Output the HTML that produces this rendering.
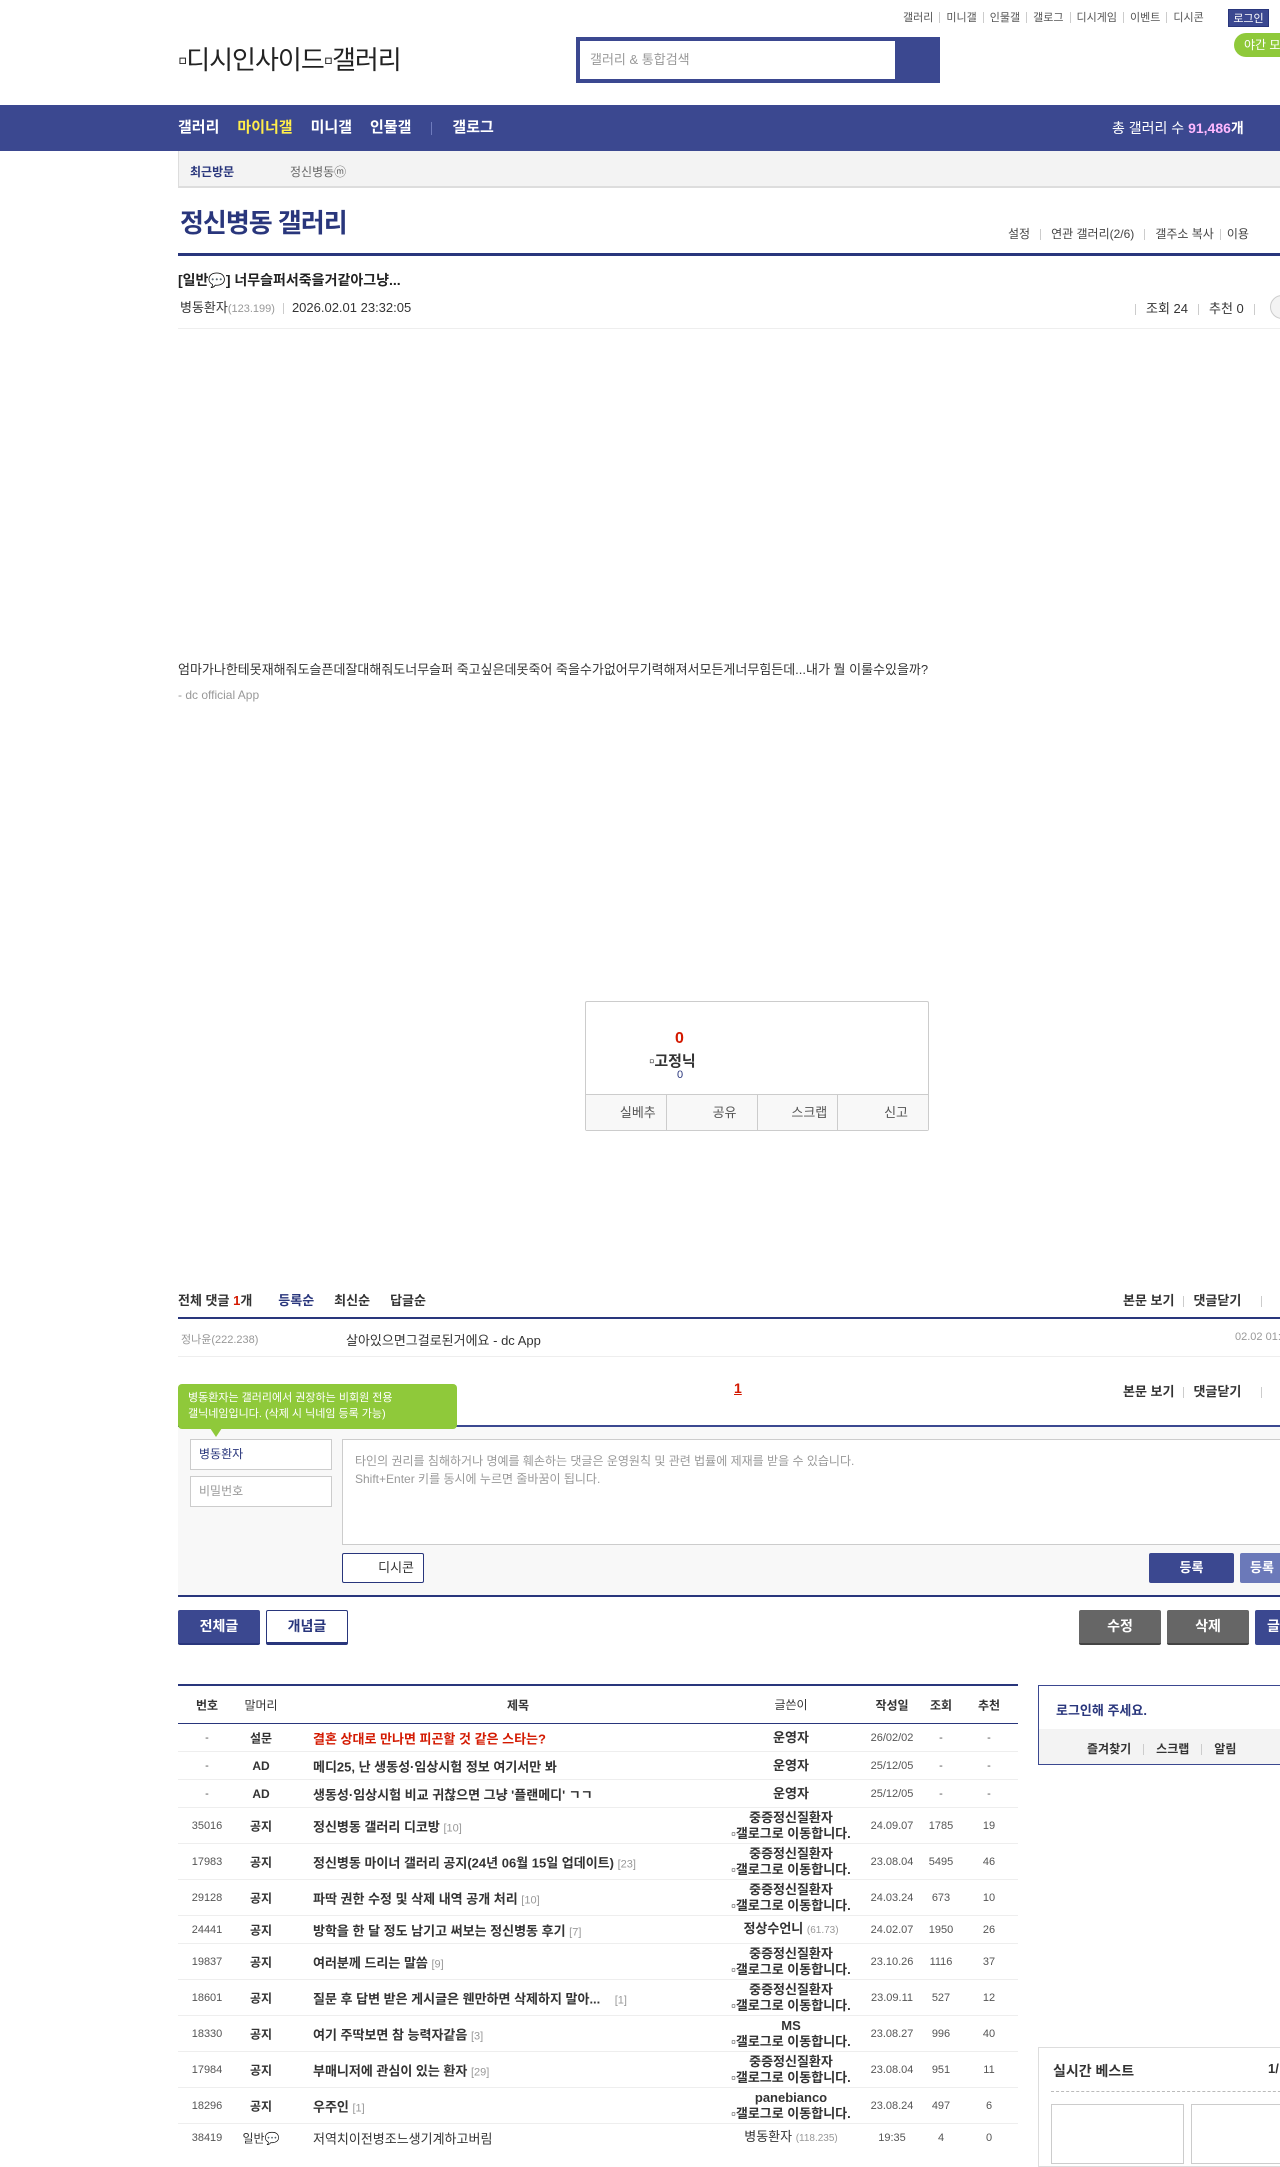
<!DOCTYPE html>
<html><head><meta charset="utf-8">
<style>
*{margin:0;padding:0;box-sizing:border-box}
body{width:1280px;height:2143px;position:relative;overflow:hidden;background:#fff;font-family:"Liberation Sans","Noto Sans CJK KR",sans-serif;color:#333;font-size:12px}
.a{position:absolute;white-space:nowrap}
.nv{color:#29367c}
.tl a{color:#555;font-size:11px}
.sep{display:inline-block;width:1px;height:11px;background:#ccc;margin:0 6px;vertical-align:middle}
.row{position:absolute;left:178px;width:840px;border-bottom:1px solid #eee;font-size:12px}
.row span{position:absolute;top:50%;transform:translateY(-50%)}
.c1{left:0;width:58px;text-align:center;color:#555;font-size:11px}
.c2{left:58px;width:50px;text-align:center;font-weight:bold}
.c3{left:135px;font-weight:bold;color:#333;font-size:13px}
.c3 i{font-style:normal;font-weight:normal;color:#999;font-size:11px}
.c4{left:530px;width:166px;text-align:center;font-weight:bold;line-height:16px;font-size:13px}
.c4 small{font-weight:normal;color:#999;font-size:10px}
.c5{left:686px;width:56px;text-align:center;font-size:11px;color:#555}
.c6{left:742px;width:42px;text-align:center;font-size:11px;color:#555}
.c7{left:790px;width:42px;text-align:center;font-size:11px;color:#555}
.btn{position:absolute;text-align:center;font-weight:bold;font-size:14px;color:#fff;border-radius:2px}
</style></head><body>

<div class="a tl" style="left:903px;top:10px;line-height:14px"><a>갤러리</a><span class="sep"></span><a>미니갤</a><span class="sep"></span><a>인물갤</a><span class="sep"></span><a>갤로그</a><span class="sep"></span><a>디시게임</a><span class="sep"></span><a>이벤트</a><span class="sep"></span><a>디시콘</a></div>
<div class="a" style="left:1228px;top:9px;width:41px;height:18px;background:#3b4890;color:#fff;font-size:11px;text-align:center;line-height:18px;border:1px solid #29367c">로그인</div>
<div class="a" style="left:1234px;top:33px;width:60px;height:24px;background:#8fc93a;color:#fff;font-size:12px;line-height:24px;padding-left:10px;border-radius:12px 0 0 12px">야간 모드</div>

<div class="a" style="left:178px;top:40px;font-size:26px;color:#222;letter-spacing:-1px">▫디시인사이드▫갤러리</div>

<div class="a" style="left:576px;top:37px;width:364px;height:46px;background:#3b4890"></div>
<div class="a" style="left:580px;top:41px;width:315px;height:38px;background:#fff;color:#999;font-size:13px;line-height:38px;padding-left:10px">갤러리 &amp; 통합검색</div>

<div class="a" style="left:0;top:105px;width:1280px;height:46px;background:#3b4890"></div>
<div class="a" style="left:178px;top:119px;font-size:15px;font-weight:bold;color:#fff;line-height:18px">갤러리<span style="color:#ffed4a;margin-left:18px">마이너갤</span><span style="margin-left:18px">미니갤</span><span style="margin-left:18px">인물갤</span><span style="display:inline-block;width:1px;height:13px;background:#6e7bbd;margin:0 20px;vertical-align:middle"></span>갤로그</div>
<div class="a" style="left:1112px;top:119px;font-size:14px;color:#fff;line-height:18px">총 갤러리 수 <b style="color:#ffb8ff">91,486</b><b>개</b></div>

<div class="a" style="left:178px;top:151px;width:1102px;height:37px;background:#f3f3f3;border-bottom:2px solid #ddd;border-left:1px solid #ddd"></div>
<div class="a nv" style="left:190px;top:163px;font-size:12px;font-weight:bold">최근방문</div>
<div class="a" style="left:290px;top:163px;font-size:12px;color:#666">정신병동ⓜ</div>

<div class="a nv" style="left:180px;top:203px;font-size:26px;font-weight:bold;letter-spacing:-1px">정신병동 갤러리</div>
<div class="a" style="left:1008px;top:225px;font-size:12px;color:#444">설정<span class="sep" style="margin:0 10px"></span>연관 갤러리(2/6)<span class="sep" style="margin:0 10px"></span>갤주소 복사<span class="sep"></span>이용</div>
<div class="a" style="left:178px;top:253px;width:1102px;height:3px;background:#29367c"></div>

<div class="a" style="left:178px;top:270px;font-size:14px;font-weight:bold;color:#222">[일반💬] 너무슬퍼서죽을거같아그냥...</div>
<div class="a" style="left:180px;top:297px;font-size:13px;color:#333">병동환자<span style="font-size:11px;color:#999">(123.199)</span><span class="sep" style="margin:0 8px"></span>2026.02.01 23:32:05</div>
<div class="a" style="left:1135px;top:298px;font-size:13px;color:#333"><span class="sep" style="margin:0 10px 0 0"></span>조회 24<span class="sep" style="margin:0 10px"></span>추천 0<span class="sep" style="margin:0 10px"></span></div>
<div class="a" style="left:1270px;top:295px;width:24px;height:24px;border:1px solid #ccc;border-radius:12px;background:#f3f3f3"></div>
<div class="a" style="left:178px;top:328px;width:1102px;height:1px;background:#eee"></div>

<div class="a" style="left:178px;top:659px;font-size:13px;color:#333">엄마가나한테못재해줘도슬픈데잘대해줘도너무슬퍼 죽고싶은데못죽어 죽을수가없어무기력해져서모든게너무힘든데...내가 뭘 이룰수있을까?</div>
<div class="a" style="left:178px;top:688px;font-size:12px;color:#999">- dc official App</div>

<div class="a" style="left:585px;top:1001px;width:344px;height:130px;border:1px solid #ccc;border-radius:2px"></div>
<div class="a" style="left:675px;top:1030px;font-size:16px;font-weight:bold;color:#d31900">0</div>
<div class="a" style="left:649px;top:1050px;font-size:15px;font-weight:bold;color:#333">▫고정닉</div>
<div class="a" style="left:677px;top:1069px;font-size:11px;color:#29367c">0</div>
<div class="a" style="left:586px;top:1094px;width:342px;height:36px;background:#f8f8f8;border-top:1px solid #ccc;display:flex;font-size:13px;color:#555">
<div style="flex:1;border-right:1px solid #ccc;text-align:right;padding-right:10px;line-height:35px">실베추</div>
<div style="flex:1;border-right:1px solid #ccc;text-align:right;padding-right:20px;line-height:35px">공유</div>
<div style="flex:1;border-right:1px solid #ccc;text-align:right;padding-right:10px;line-height:35px">스크랩</div>
<div style="flex:1;text-align:right;padding-right:20px;line-height:35px">신고</div></div>

<div class="a" style="left:178px;top:1290px;font-size:13px;font-weight:bold;color:#333">전체 댓글 <span style="color:#d31900">1</span>개<span class="nv" style="margin-left:26px">등록순</span><span style="margin-left:20px">최신순</span><span style="margin-left:20px">답글순</span></div>
<div class="a" style="left:1123px;top:1290px;font-size:13px;font-weight:bold;color:#333">본문 보기<span class="sep" style="margin:0 9px"></span>댓글닫기<span class="sep" style="margin:0 20px"></span></div>
<div class="a" style="left:178px;top:1317px;width:1102px;height:2px;background:#29367c"></div>
<div class="a" style="left:181px;top:1331px;font-size:11px;color:#999">정나윤(222.238)</div>
<div class="a" style="left:346px;top:1330px;font-size:13px;color:#333">살아있으면그걸로된거에요 - dc App</div>
<div class="a" style="left:1235px;top:1331px;font-size:11px;color:#999">02.02 01:</div>
<div class="a" style="left:178px;top:1356px;width:1102px;height:1px;background:#eee"></div>

<div class="a" style="left:734px;top:1380px;font-size:14px;font-weight:bold;color:#d31900;text-decoration:underline">1</div>
<div class="a" style="left:1123px;top:1381px;font-size:13px;font-weight:bold;color:#333">본문 보기<span class="sep" style="margin:0 9px"></span>댓글닫기<span class="sep" style="margin:0 20px"></span></div>
<div class="a" style="left:178px;top:1425px;width:1102px;height:2px;background:#3b4890"></div>
<div class="a" style="left:178px;top:1427px;width:1102px;height:168px;background:#f8f8f8"></div>
<div class="a" style="left:178px;top:1384px;width:279px;height:45px;background:#8fc93a;border-radius:4px;color:#fff;font-size:11px;line-height:16px;padding:6px 10px">병동환자는 갤러리에서 권장하는 비회원 전용<br>갤닉네임입니다. (삭제 시 닉네임 등록 가능)</div>
<div class="a" style="left:210px;top:1428px;width:0;height:0;border-left:6px solid transparent;border-right:6px solid transparent;border-top:9px solid #8fc93a"></div>
<div class="a" style="left:190px;top:1439px;width:142px;height:31px;background:#fff;border:1px solid #ccc;font-size:12px;color:#29367c;line-height:29px;padding-left:8px">병동환자</div>
<div class="a" style="left:190px;top:1476px;width:142px;height:31px;background:#fff;border:1px solid #ccc;font-size:12px;color:#999;line-height:29px;padding-left:8px">비밀번호</div>
<div class="a" style="left:342px;top:1439px;width:950px;height:106px;background:#fff;border:1px solid #ccc;font-size:12px;color:#999;line-height:18px;padding:12px 12px">타인의 권리를 침해하거나 명예를 훼손하는 댓글은 운영원칙 및 관련 법률에 제재를 받을 수 있습니다.<br>Shift+Enter 키를 동시에 누르면 줄바꿈이 됩니다.</div>
<div class="a" style="left:342px;top:1553px;width:82px;height:30px;background:#fff;border:1px solid #29367c;border-radius:2px;font-size:13px;color:#333;line-height:28px;text-align:right;padding-right:9px">디시콘</div>
<div class="btn" style="left:1149px;top:1553px;width:85px;height:30px;background:#3b4890;line-height:30px;font-size:13px">등록</div>
<div class="btn" style="left:1240px;top:1553px;width:60px;height:30px;background:#6b79b9;line-height:30px;font-size:13px;text-align:left;padding-left:10px">등록</div>
<div class="a" style="left:178px;top:1595px;width:1102px;height:2px;background:#29367c"></div>

<div class="btn" style="left:178px;top:1610px;width:82px;height:35px;background:#3b4890;line-height:33px;border-bottom:2px solid #29367c">전체글</div>
<div class="btn" style="left:266px;top:1610px;width:82px;height:35px;background:#fff;color:#29367c;border:1px solid #29367c;border-bottom:3px solid #29367c;line-height:31px">개념글</div>
<div class="btn" style="left:1079px;top:1610px;width:82px;height:35px;background:#666;line-height:33px;border-bottom:2px solid #444">수정</div>
<div class="btn" style="left:1167px;top:1610px;width:82px;height:35px;background:#666;line-height:33px;border-bottom:2px solid #444">삭제</div>
<div class="btn" style="left:1255px;top:1610px;width:40px;height:35px;background:#3b4890;line-height:33px;text-align:left;padding-left:12px">글</div>

<div class="a" style="left:178px;top:1684px;width:840px;height:2px;background:#29367c"></div>
<div class="row" style="top:1686px;height:38px;border-bottom:1px solid #29367c;font-weight:bold;font-size:12px">
<span class="c1" style="font-size:12px;color:#333">번호</span><span class="c2" style="font-weight:normal">말머리</span><span style="left:300px;width:80px;text-align:center">제목</span><span class="c4" style="font-weight:normal;font-size:12px">글쓴이</span><span class="c5" style="font-size:12px;color:#333">작성일</span><span class="c6" style="font-size:12px;color:#333">조회</span><span class="c7" style="font-size:12px;color:#333">추천</span></div>

<div class="row" style="top:1724px;height:28px"><span class="c1">-</span><span class="c2">설문</span><span class="c3" style="color:#d31900">결혼 상대로 만나면 피곤할 것 같은 스타는?</span><span class="c4">운영자</span><span class="c5">26/02/02</span><span class="c6">-</span><span class="c7">-</span></div>
<div class="row" style="top:1752px;height:28px"><span class="c1">-</span><span class="c2">AD</span><span class="c3">메디25, 난 생동성·임상시험 정보 여기서만 봐</span><span class="c4">운영자</span><span class="c5">25/12/05</span><span class="c6">-</span><span class="c7">-</span></div>
<div class="row" style="top:1780px;height:28px"><span class="c1">-</span><span class="c2">AD</span><span class="c3">생동성·임상시험 비교 귀찮으면 그냥 '플랜메디' ㄱㄱ</span><span class="c4">운영자</span><span class="c5">25/12/05</span><span class="c6">-</span><span class="c7">-</span></div>
<div class="row" style="top:1808px;height:36px"><span class="c1">35016</span><span class="c2">공지</span><span class="c3">정신병동 갤러리 디코방 <i>[10]</i></span><span class="c4">중증정신질환자<br>▫갤로그로 이동합니다.</span><span class="c5">24.09.07</span><span class="c6">1785</span><span class="c7">19</span></div>
<div class="row" style="top:1844px;height:36px"><span class="c1">17983</span><span class="c2">공지</span><span class="c3">정신병동 마이너 갤러리 공지(24년 06월 15일 업데이트) <i>[23]</i></span><span class="c4">중증정신질환자<br>▫갤로그로 이동합니다.</span><span class="c5">23.08.04</span><span class="c6">5495</span><span class="c7">46</span></div>
<div class="row" style="top:1880px;height:36px"><span class="c1">29128</span><span class="c2">공지</span><span class="c3">파딱 권한 수정 및 삭제 내역 공개 처리 <i>[10]</i></span><span class="c4">중증정신질환자<br>▫갤로그로 이동합니다.</span><span class="c5">24.03.24</span><span class="c6">673</span><span class="c7">10</span></div>
<div class="row" style="top:1916px;height:28px"><span class="c1">24441</span><span class="c2">공지</span><span class="c3">방학을 한 달 정도 남기고 써보는 정신병동 후기 <i>[7]</i></span><span class="c4">정상수언니 <small>(61.73)</small></span><span class="c5">24.02.07</span><span class="c6">1950</span><span class="c7">26</span></div>
<div class="row" style="top:1944px;height:36px"><span class="c1">19837</span><span class="c2">공지</span><span class="c3">여러분께 드리는 말씀 <i>[9]</i></span><span class="c4">중증정신질환자<br>▫갤로그로 이동합니다.</span><span class="c5">23.10.26</span><span class="c6">1116</span><span class="c7">37</span></div>
<div class="row" style="top:1980px;height:36px"><span class="c1">18601</span><span class="c2">공지</span><span class="c3">질문 후 답변 받은 게시글은 웬만하면 삭제하지 말아... &nbsp;&nbsp;&nbsp;<i>[1]</i></span><span class="c4">중증정신질환자<br>▫갤로그로 이동합니다.</span><span class="c5">23.09.11</span><span class="c6">527</span><span class="c7">12</span></div>
<div class="row" style="top:2016px;height:36px"><span class="c1">18330</span><span class="c2">공지</span><span class="c3">여기 주딱보면 참 능력자같음 <i>[3]</i></span><span class="c4">MS<br>▫갤로그로 이동합니다.</span><span class="c5">23.08.27</span><span class="c6">996</span><span class="c7">40</span></div>
<div class="row" style="top:2052px;height:36px"><span class="c1">17984</span><span class="c2">공지</span><span class="c3">부매니저에 관심이 있는 환자 <i>[29]</i></span><span class="c4">중증정신질환자<br>▫갤로그로 이동합니다.</span><span class="c5">23.08.04</span><span class="c6">951</span><span class="c7">11</span></div>
<div class="row" style="top:2088px;height:36px"><span class="c1">18296</span><span class="c2">공지</span><span class="c3">우주인 <i>[1]</i></span><span class="c4">panebianco<br>▫갤로그로 이동합니다.</span><span class="c5">23.08.24</span><span class="c6">497</span><span class="c7">6</span></div>
<div class="row" style="top:2124px;height:28px;border:none"><span class="c1">38419</span><span class="c2" style="font-weight:normal">일반💬</span><span class="c3" style="font-weight:normal">저역치이전병조느생기계하고버림</span><span class="c4" style="font-weight:normal">병동환자 <small>(118.235)</small></span><span class="c5">19:35</span><span class="c6">4</span><span class="c7">0</span></div>

<div class="a" style="left:1038px;top:1685px;width:260px;height:80px;border:1px solid #3b4890"></div>
<div class="a nv" style="left:1056px;top:1700px;font-size:13px;font-weight:bold">로그인해 주세요.</div>
<div class="a" style="left:1039px;top:1729px;width:250px;height:35px;background:#f3f3f3"></div>
<div class="a" style="left:1087px;top:1740px;font-size:12px;font-weight:bold;color:#333">즐겨찾기<span class="sep" style="margin:0 12px"></span>스크랩<span class="sep" style="margin:0 12px"></span>알림</div>

<div class="a" style="left:1038px;top:2047px;width:260px;height:120px;border:1px solid #ddd"></div>
<div class="a" style="left:1053px;top:2061px;font-size:14px;font-weight:bold;color:#333">실시간 베스트</div>
<div class="a" style="left:1268px;top:2061px;font-size:13px;font-weight:bold;color:#333">1/</div>
<div class="a" style="left:1051px;top:2091px;width:240px;border-top:1px dashed #bbb"></div>
<div class="a" style="left:1051px;top:2104px;width:133px;height:60px;border:1px solid #ccc"></div>
<div class="a" style="left:1191px;top:2104px;width:100px;height:60px;border:1px solid #ccc"></div>
</body></html>
